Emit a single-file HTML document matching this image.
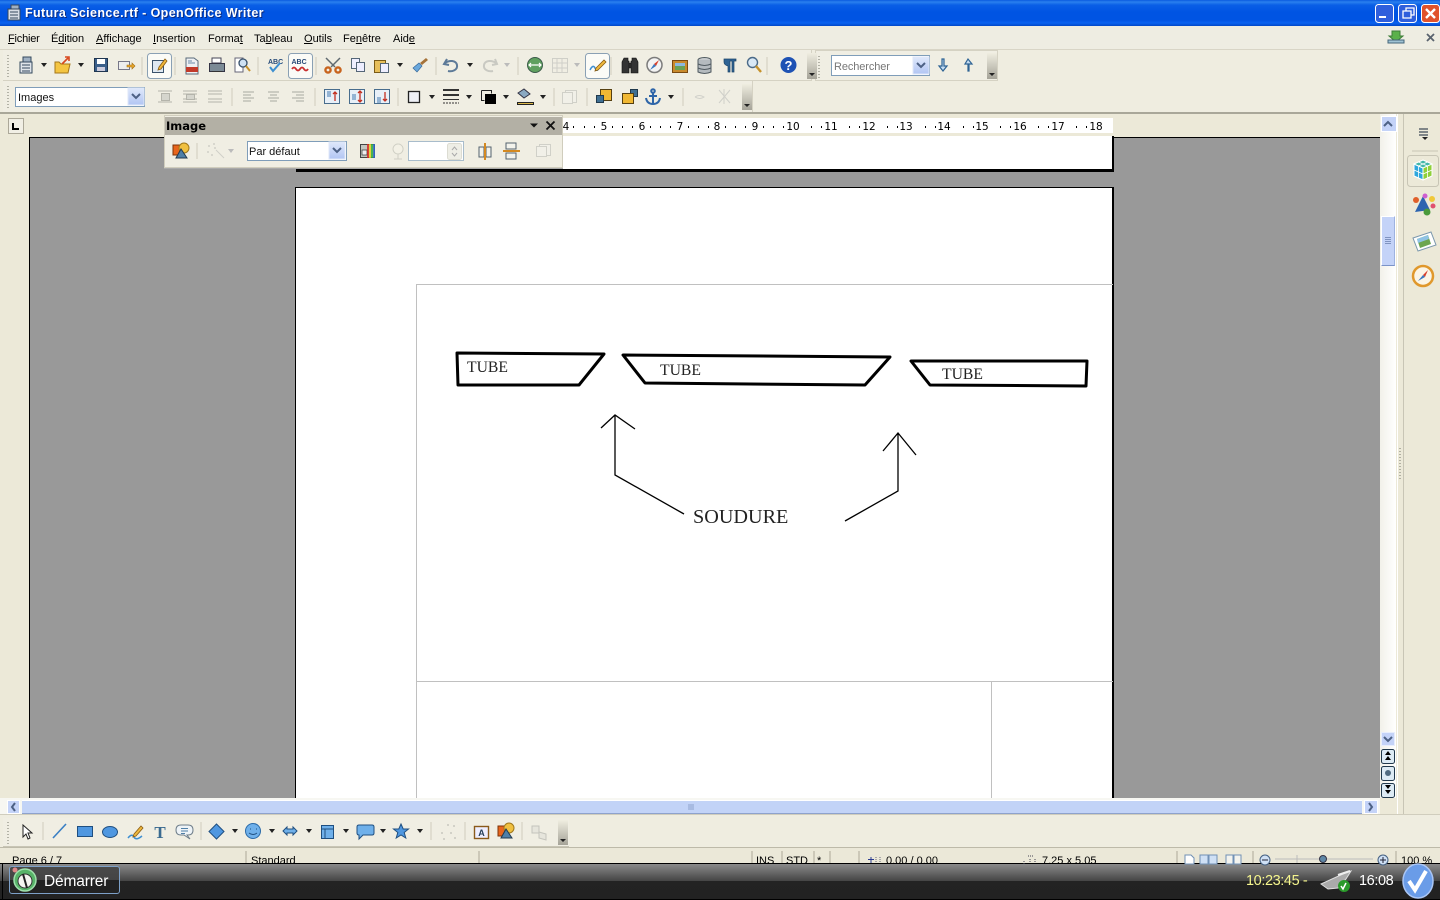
<!DOCTYPE html>
<html><head><meta charset="utf-8"><style>
html,body{margin:0;padding:0;width:1440px;height:900px;overflow:hidden;background:#ece9d8}
#a{position:relative;width:1440px;height:900px;overflow:hidden;font-family:"Liberation Sans",sans-serif}
.b{position:absolute}
.t{position:absolute;white-space:nowrap;font-size:11px;color:#000;line-height:13px}
u{text-decoration:underline}
svg{position:absolute;left:0;top:0}
.r{position:absolute;top:121px;font:10.5px/12px "DejaVu Sans",sans-serif;color:#000;transform:translateX(-50%)}
</style></head><body><div id="a">
<div class="b" style="left:0;top:0;width:1440px;height:26px;background:linear-gradient(#0a5be0 0,#2a80ee 2px,#0a5fe6 5px,#0054e3 12px,#0054e3 20px,#0a62f0 23px,#0048c8 26px)"></div>
<div class="t" style="left:25px;top:6px;font:bold 12.5px/15px 'Liberation Sans',sans-serif;color:#fff;letter-spacing:.39px;text-shadow:1px 1px #0a2a80">Futura Science.rtf - OpenOffice Writer</div>
<div class="b" style="left:0;top:26px;width:1440px;height:24px;background:#eeede2;border-bottom:1px solid #d8d5c6;box-sizing:border-box"></div>
<div class="t" style="left:8px;top:33px;letter-spacing:-.2px"><u>F</u>ichier</div>
<div class="t" style="left:51px;top:33px;letter-spacing:-.1px">É<u>d</u>ition</div>
<div class="t" style="left:96px;top:33px"><u>A</u>ffichage</div>
<div class="t" style="left:153px;top:33px"><u>I</u>nsertion</div>
<div class="t" style="left:208px;top:33px">Forma<u>t</u></div>
<div class="t" style="left:254px;top:33px">Ta<u>b</u>leau</div>
<div class="t" style="left:304px;top:33px"><u>O</u>utils</div>
<div class="t" style="left:343px;top:33px">Fe<u>n</u>être</div>
<div class="t" style="left:393px;top:33px">Aid<u>e</u></div>
<div class="b" style="left:0;top:50px;width:1440px;height:62px;background:#efede0"></div>
<div class="b" style="left:3px;top:50px;width:809px;height:31px;background:#f0eee3;border-right:1px solid #d5d2c3;border-bottom:1px solid #d5d2c3;box-sizing:border-box"></div>
<div class="b" style="left:815px;top:50px;width:183px;height:31px;background:#f0eee3;border:1px solid #d5d2c3;box-sizing:border-box"></div>
<div class="b" style="left:3px;top:81px;width:750px;height:31px;background:#f0eee3;border-right:1px solid #d5d2c3;box-sizing:border-box"></div>
<div class="b" style="left:0;top:112px;width:1440px;height:2px;background:#a9a799"></div>
<div class="b" style="left:0;top:114px;width:1440px;height:24px;background:#ece9d8"></div>
<div class="b" style="left:563px;top:118px;width:550px;height:15px;background:#fff"></div>
<div class="b" style="left:29px;top:137px;width:1351px;height:661px;background:#999;border-top:1px solid #000;border-left:1px solid #000;box-sizing:border-box"></div>
<div class="b" style="left:296px;top:136px;width:818px;height:36px;background:#fff;border:2px solid #000;border-top:0;border-bottom-width:3px;border-left-width:1px;box-sizing:border-box"></div>
<div class="b" style="left:295px;top:187px;width:819px;height:611px;background:#fff;border:1px solid #000;border-bottom:0;border-right-width:2px;box-sizing:border-box"></div>
<div class="b" style="left:416px;top:284px;width:1px;height:514px;background:#c0c0c0"></div>
<div class="b" style="left:416px;top:284px;width:697px;height:1px;background:#c0c0c0"></div>
<div class="b" style="left:416px;top:681px;width:697px;height:1px;background:#c0c0c0"></div>
<div class="b" style="left:991px;top:681px;width:1px;height:117px;background:#c0c0c0"></div>
<div class="t" style="left:467px;top:358px;font:16px/19px 'Liberation Serif',serif;color:#222;transform:scaleX(.98);transform-origin:left">TUBE</div>
<div class="t" style="left:660px;top:361px;font:16px/19px 'Liberation Serif',serif;color:#222;transform:scaleX(.98);transform-origin:left">TUBE</div>
<div class="t" style="left:942px;top:365px;font:16px/19px 'Liberation Serif',serif;color:#222;transform:scaleX(.98);transform-origin:left">TUBE</div>
<div class="t" style="left:693px;top:506px;font:20px/23px 'Liberation Serif',serif;color:#222;transform:scaleX(1.01);transform-origin:left">SOUDURE</div>
<div class="r" style="left:566px">4</div><div class="r" style="left:604px">5</div><div class="r" style="left:642px">6</div><div class="r" style="left:680px">7</div><div class="r" style="left:717px">8</div><div class="r" style="left:755px">9</div><div class="r" style="left:793px">10</div><div class="r" style="left:831px">11</div><div class="r" style="left:869px">12</div><div class="r" style="left:906px">13</div><div class="r" style="left:944px">14</div><div class="r" style="left:982px">15</div><div class="r" style="left:1020px">16</div><div class="r" style="left:1058px">17</div><div class="r" style="left:1096px">18</div>
<div class="b" style="left:8px;top:118px;width:16px;height:16px;background:#f1efe5;border:1px solid #aca899;box-sizing:border-box"></div>
<div class="b" style="left:164px;top:115px;width:399px;height:53px;background:#f0eee3;border:1px solid #d0cdbd;box-sizing:border-box;box-shadow:0 1px 0 #aaa"></div>
<div class="b" style="left:165px;top:117px;width:397px;height:18px;background:#b3b0a5"></div>
<div class="t" style="left:166px;top:119px;font:bold 11.5px/14px 'DejaVu Sans',sans-serif">Image</div>
<div class="b" style="left:15px;top:87px;width:130px;height:20px;background:#fff;border:1px solid #7f9db9;box-sizing:border-box"></div>
<div class="t" style="left:18px;top:92px;color:#111">Images</div>
<div class="b" style="left:247px;top:141px;width:100px;height:20px;background:#fff;border:1px solid #7f9db9;box-sizing:border-box"></div>
<div class="t" style="left:249px;top:146px;color:#111">Par défaut</div>
<div class="b" style="left:408px;top:141px;width:56px;height:20px;background:#fff;border:1px solid #a8bccb;box-sizing:border-box"></div>
<div class="b" style="left:831px;top:55px;width:99px;height:21px;background:#fff;border:1px solid #7f9db9;box-sizing:border-box"></div>
<div class="t" style="left:834px;top:61px;color:#777;letter-spacing:-.1px">Rechercher</div>
<div class="b" style="left:1380px;top:114px;width:16px;height:684px;background:linear-gradient(90deg,#f2f1ea,#fff)"></div>
<div class="b" style="left:1396px;top:114px;width:44px;height:736px;background:#ece9d8"></div>
<div class="b" style="left:1397px;top:114px;width:1px;height:736px;background:#fff"></div>
<div class="b" style="left:1403px;top:114px;width:1px;height:736px;background:#c8c5b5"></div>
<div class="b" style="left:1381px;top:116px;width:14px;height:14px;background:#c4d3f8;border:1px solid #fff;box-shadow:0 0 0 0 #000"></div>
<div class="b" style="left:1381px;top:216px;width:14px;height:50px;background:#c4d3f8;border-left:1px solid #fff;border-top:1px solid #fff;border-bottom:1px solid #7b93c8;border-right:1px solid #9db2e0;box-sizing:border-box"></div>
<div class="b" style="left:1381px;top:732px;width:14px;height:14px;background:#c4d3f8;box-sizing:border-box;border:1px solid #e8eefc"></div>
<div class="b" style="left:0;top:798px;width:1380px;height:16px;background:#f7f7f2"></div>
<div class="b" style="left:7px;top:800px;width:13px;height:14px;background:#c4d3f8;border:1px solid #fff;box-sizing:border-box"></div>
<div class="b" style="left:22px;top:800px;width:1340px;height:14px;background:#c2d3f7;border-bottom:1px solid #8ea2cc;border-top:1px solid #fff;box-sizing:border-box"></div>
<div class="b" style="left:1364px;top:800px;width:14px;height:14px;background:#c4d3f8;border:1px solid #fff;box-sizing:border-box"></div>
<div class="b" style="left:0;top:814px;width:1440px;height:36px;background:#efede0;border-top:1px solid #d0cdbd;box-sizing:border-box"></div>
<div class="b" style="left:3px;top:818px;width:566px;height:29px;background:#f0eee3;border-bottom:1px solid #c8c5b5;box-sizing:border-box"></div>
<div class="b" style="left:0;top:847px;width:1440px;height:16px;background:#ebe8d8;border-top:1px solid #bdbaa9;box-sizing:border-box"></div>
<div class="t" style="left:12px;top:855px">Page 6 / 7</div>
<div class="t" style="left:251px;top:855px">Standard</div>
<div class="t" style="left:756px;top:855px">INS</div>
<div class="t" style="left:786px;top:855px">STD</div>
<div class="t" style="left:817px;top:855px">*</div>
<div class="t" style="left:886px;top:855px">0,00 / 0,00</div>
<div class="t" style="left:1042px;top:855px">7,25 x 5,05</div>
<div class="t" style="left:1401px;top:855px">100 %</div>
<div class="b" style="left:0;top:863px;width:1440px;height:37px;background:linear-gradient(#000 0,#000 1px,#8a8a8a 1px,#454545 18px,#232323 18px,#222 36px,#000 36px);z-index:5"></div>
<div class="b" style="left:2px;top:863px;width:1px;height:37px;background:#000;z-index:6"></div>
<div class="b" style="left:9px;top:866px;width:111px;height:28px;background:linear-gradient(#4a4a4a,#444 50%,#222 50%);border:1px solid #7da0c8;border-radius:3px;box-sizing:border-box;z-index:6"></div>
<div class="t" style="left:44px;top:873px;font-size:15.5px;line-height:18px;color:#fff;z-index:7;letter-spacing:-.15px">Démarrer</div>
<div class="t" style="left:1246px;top:873px;font-size:14.5px;line-height:17px;color:#f5f58e;z-index:7;letter-spacing:-.4px">10:23:45 -</div>
<div class="t" style="left:1359px;top:873px;font-size:14.5px;line-height:17px;color:#fff;z-index:7;letter-spacing:-.4px">16:08</div>
<svg width="1440" height="900" viewBox="0 0 1440 900" style="z-index:8" fill="none">
<!-- drawing -->
<g stroke="#000" stroke-width="3" stroke-linejoin="round"><path d="M457 353L604 354L579 385L458 385Z"/><path d="M623 355L890 357L865 385L645 383Z"/><path d="M911 361L1087 361L1086 386L930 385Z"/></g>
<g stroke="#000" stroke-width="1.3"><path d="M601 428L615 415L635 429M615 415V475L684 514"/><path d="M883 451L898 433L916 455M898 433V491L845 521"/></g>
<!-- title icons -->
<g><rect x="8" y="9" width="12" height="11" fill="#d8dde6" stroke="#33465c"/><path d="M11 5h8v4h-8z" fill="#9fb0c2" stroke="#33465c"/><path d="M10 12h8M10 15h8M10 18h8" stroke="#33465c"/></g>
<g stroke="#fff"><rect x="1375.5" y="4.5" width="18" height="18" rx="3" fill="#2f5fdc"/><rect x="1398.5" y="4.5" width="18" height="18" rx="3" fill="#2f5fdc"/><rect x="1421.5" y="4.5" width="18" height="18" rx="3" fill="#e0522c"/></g>
<path d="M1379 17h7" stroke="#fff" stroke-width="2"/><path d="M1403 11h8v7h-8zM1406 11V8h8v7h-3" stroke="#fff" stroke-width="1.3"/><path d="M1426 9l9 9M1435 9l-9 9" stroke="#fff" stroke-width="2.4"/>
<path d="M1388 42h16M1392 31h8v5h3l-7 6-7-6h3z" fill="#5bb14a" stroke="#3e7d38"/><rect x="1388" y="40" width="16" height="3" fill="#9fc3d4" stroke="#44667a"/>
<path d="M1427 34l7 7M1434 34l-7 7" stroke="#59636e" stroke-width="1.8"/>
<!-- handles -->
<g stroke="#8a8a7e" stroke-dasharray="1 2" stroke-width="1.2"><path d="M8 55v22M8 86v22M8 822v22M819 56v22M1400 448v32"/></g>
<!-- separators -->
<g stroke="#cfccbd"><path d="M142 57v18M175 57v18M258 57v18M316 57v18M436 57v18M518 57v18M611 57v18M767 57v18M232 88v18M315 88v18M398 88v18M554 88v18M587 88v18M683 88v18M197 143v16M43 822v18M201 822v18M431 822v18M465 822v18M522 822v18"/></g>
<g stroke="#aca899"><path d="M246 851v12M479 851v12M752 851v12M782 851v12M814 851v12M830 851v12M859 851v12M1177 851v12M1253 851v12M1396 851v12"/></g>
<!-- toggled boxes -->
<g fill="#fbfbf7" stroke="#8aa0b4"><rect x="147.5" y="53.5" width="24" height="25" rx="3"/><rect x="288.5" y="53.5" width="24" height="25" rx="3"/><rect x="585.5" y="53.5" width="24" height="25" rx="3"/></g>
<!-- arrows -->
<g fill="#222"><path d="M41 63h6l-3 4zM78 63h6l-3 4zM397 63h6l-3 4zM467 63h6l-3 4zM429 95h6l-3 4zM466 95h6l-3 4zM503 95h6l-3 4zM540 95h6l-3 4zM668 95h6l-3 4zM232 829h6l-3 4zM269 829h6l-3 4zM306 829h6l-3 4zM343 829h6l-3 4zM380 829h6l-3 4zM417 829h6l-3 4z"/></g>
<g fill="#bbb"><path d="M504 63h6l-3 4zM574 63h6l-3 4zM228 149h6l-3 4z"/></g>
<!-- toolbar 1 -->
<path d="M20 62h12v11H20z" fill="#dfe4ea" stroke="#34495e"/><path d="M23 57h8v5h-8z" fill="#9fb0c2" stroke="#34495e"/><path d="M22 65h8M22 68h8M22 71h8" stroke="#34495e"/>
<path d="M55 62h4l2 2h9l-2 9H55z" fill="#f4c542" stroke="#a5761a"/><path d="M62 64l6-6M65 57h4v4" stroke="#d9481e" stroke-width="1.6"/>
<rect x="94.500" y="58.500" width="13" height="13" fill="#3a5f8a" stroke="#1f3550"/><rect x="97" y="59" width="8" height="5" fill="#fff"/><rect x="97" y="67" width="8" height="4" fill="#ccd"/>
<rect x="118.500" y="61.500" width="11" height="8" fill="#eee" stroke="#778"/><path d="M127 65h5v-2l3 3-3 3v-2h-5z" fill="#e9a72c" stroke="#a26f12" stroke-width=".6"/>
<rect x="152.500" y="60.500" width="11" height="12" fill="#dfe8f1" stroke="#3a526b"/><path d="M159 67l6-8 2 2-6 8-3 1z" fill="#f0b73a" stroke="#8a5c12" stroke-width=".8"/>
<path d="M186 58h8l4 3v13h-12z" fill="#eef0f3" stroke="#5a6a7a"/><path d="M188 61h4M188 63h7" stroke="#6a8aa8"/><rect x="186" y="67" width="12" height="5" fill="#c23a2a"/>
<path d="M212 58h9v5h-9z" fill="#fff" stroke="#445"/><rect x="209.500" y="63.500" width="15" height="8" fill="#7b8a96" stroke="#334"/><rect x="212" y="71" width="10" height="1" fill="#333"/>
<path d="M235 58h8v14h-8z" fill="#fff" stroke="#667"/><circle cx="243" cy="63" r="4" fill="#cfe2f3" stroke="#37506b" stroke-width="1.3"/><path d="M246 66l4 5" stroke="#c6922c" stroke-width="2"/>
<text x="268" y="64" font-family="Liberation Sans" font-size="7" font-weight="bold" fill="#274a78">ABC</text><path d="M270 67l3 4 7-8" stroke="#3d8fd0" stroke-width="2"/>
<text x="291.500" y="64" font-family="Liberation Sans" font-size="7" font-weight="bold" fill="#274a78">ABC</text><path d="M292 69q2-3 4 0t4 0 4 0 4 0" stroke="#c92f2f" stroke-width="1.8"/>
<path d="M326 58l9 9M340 58l-9 9" stroke="#606a70" stroke-width="1.5"/><circle cx="328" cy="70" r="2.600" stroke="#c8641e" stroke-width="2.4"/><circle cx="338" cy="70" r="2.600" stroke="#c8641e" stroke-width="2.4"/>
<rect x="351.500" y="58.500" width="8" height="10" fill="#eef" stroke="#567"/><rect x="356.500" y="62.500" width="8" height="9" fill="#eef" stroke="#567"/>
<rect x="374.500" y="60.500" width="11" height="12" fill="#e7bf5b" stroke="#7a5b17"/><rect x="380.500" y="63.500" width="8" height="9" fill="#eef" stroke="#567"/>
<path d="M426 58l2 2-6 5-2-2z" fill="#a57238"/><path d="M413 68l6-5 3 3-5 6z" fill="#6aa8dc" stroke="#35689a" stroke-width=".7"/>
<path d="M447 59l-3 5 5 1M445 63c4-3 11-3 12 2s-5 7-9 6" stroke="#5d7a98" stroke-width="2"/>
<path d="M495 59l2 5-5 1M496 63c-4-3-11-3-12 2s5 7 9 6" stroke="#c9c9c2" stroke-width="2"/>
<circle cx="535" cy="65" r="7.500" fill="#5fa05f" stroke="#3b5a4a"/><path d="M529 65h12M531 63l-2 2 2 2M539 63l2 2-2 2" stroke="#fff" stroke-width="1.2"/>
<path d="M552.500 58.500h15v14h-15zM552 63h16M552 68h16M557 58v14M562 58v14" stroke="#cfcfc8"/>
<path d="M590 70q3-6 5-2t3 1" stroke="#3f8fd1" stroke-width="1.5"/><path d="M596 68l8-8 2 2-8 8-3 1z" fill="#efb93e" stroke="#8a5c12" stroke-width=".8"/>
<path d="M624 58h4v3h1v12h-7V62zM632 58h4l2 4v11h-7V61h1zM629 63h2v5h-2z" fill="#333" stroke="#111" stroke-width=".6"/>
<circle cx="654.500" cy="65" r="7.500" fill="#f3f3f3" stroke="#7b7b7b" stroke-width="1.5"/><path d="M654 64l5-4-3 6z" fill="#d8402d"/><path d="M650 70l4-6 2 2z" fill="#3a78c0"/>
<rect x="672.500" y="60.500" width="15" height="12" fill="#c98a2c" stroke="#7a4a12"/><rect x="675" y="63" width="10" height="7" fill="#6aa255"/><rect x="675" y="63" width="10" height="3" fill="#8db8dd"/>
<ellipse cx="704.500" cy="60" rx="6.500" ry="2.500" fill="#c5c9cc" stroke="#505a60"/><path d="M698 60v12q6.500 3 13 0V60M698 64q6.500 3 13 0M698 68q6.500 3 13 0" fill="#b5bbbf" stroke="#505a60"/>
<path d="M724 59h12v2h-2v11h-2V61h-2v11h-2v-6q-4-1-4-4t0-3z" fill="#2e6394" stroke="#1d4468" stroke-width=".7"/>
<circle cx="752.500" cy="62.500" r="5" fill="#d9e8f5" stroke="#4b6a88" stroke-width="1.4"/><path d="M756 66l5 6" stroke="#c6922c" stroke-width="2.4"/>
<circle cx="788.500" cy="65" r="8" fill="#1e52b4"/><text x="788.500" y="70" text-anchor="middle" font-family="Liberation Sans" font-weight="bold" font-size="13" fill="#fff">?</text>
<path d="M943 59v7h-3l4 5 4-5h-3v-7z" transform="translate(-1 0)" fill="#c5dcf2" stroke="#2e6394" stroke-width="1.200"/>
<path d="M968 71v-7h-3l3-5 4 5h-3v7z" fill="#c5dcf2" stroke="#2e6394" stroke-width="1.200"/>
<defs><linearGradient id="ov" x1="0" y1="0" x2="0" y2="1"><stop offset="0" stop-color="#efede0"/><stop offset="1" stop-color="#a5a398"/></linearGradient><linearGradient id="dd" x1="0" y1="0" x2="0" y2="1"><stop offset="0" stop-color="#dfe8fb"/><stop offset="1" stop-color="#b1c5f3"/></linearGradient></defs>
<g fill="url(#ov)"><rect x="807" y="53" width="10" height="26"/><rect x="987" y="53" width="10" height="26"/><rect x="742" y="84" width="10" height="26"/><rect x="558" y="820" width="10" height="25"/></g>
<g fill="#222"><path d="M809 73h6l-3 3zM989 73h6l-3 3zM744 104h6l-3 3zM560 839h6l-3 3z"/></g>
<g fill="url(#dd)" stroke="#dfe7f8"><rect x="913" y="57" width="16" height="17"/><rect x="128" y="88" width="16" height="17"/><rect x="329" y="142" width="16" height="17"/></g>
<g stroke="#4d6185" stroke-width="2"><path d="M917 63l4 4 4-4M132 94l4 4 4-4M333 148l4 4 4-4"/></g>
<!-- toolbar 2 -->
<g stroke="#b4b4ab"><path d="M158 91h14M158 102h14M183 91h14M183 102h14M208 91h14M208 102h14M208 94h14M208 99h14M183 94h14M183 99h14"/><rect x="161.500" y="93.500" width="8" height="7" fill="#d5d5cd"/><rect x="186.500" y="94.500" width="8" height="5" fill="#d5d5cd"/></g>
<g stroke="#a9a9a0"><path d="M243 92h11M243 95h8M243 98h11M243 101h8M268 92h11M270 95h7M268 98h11M270 101h7M292 92h12M296 95h8M292 98h12M296 101h8"/></g>
<g fill="#e8f0f8" stroke="#486d8d"><rect x="324.500" y="89.500" width="15" height="14"/><rect x="349.500" y="89.500" width="15" height="14"/><rect x="374.500" y="89.500" width="15" height="14"/></g>
<g stroke="#3f78b0"><path d="M327 92h4M327 94h4M327 96h4M352 95h4M352 97h4M352 99h4M377 98h4M377 100h4M377 102h4"/></g>
<g stroke="#c22f20" stroke-width="1.300"><path d="M335 92v9M333 94l2-2 2 2M360 91v11M358 93l2-2 2 2M358 100l2 2 2-2M385 92v9M383 99l2 2 2-2"/></g>
<rect x="408.500" y="91.500" width="11" height="11" fill="#eef0f6" stroke="#222" stroke-width="1.300"/>
<path d="M443 90h16" stroke="#333" stroke-width="2"/><path d="M443 95h16" stroke="#333" stroke-width="2"/><path d="M443 99.500h16" stroke="#333"/><path d="M443 103h16" stroke="#333" stroke-dasharray="2 1"/>
<path d="M481.500 90.500h10v3M481.500 90.500v10h3" stroke="#222"/><rect x="485" y="94" width="11" height="10" fill="#000"/>
<path d="M518 93l6-4 6 5-6 4z" fill="#8aa9c2" stroke="#334"/><rect x="517.500" y="102.500" width="16" height="2" fill="#dbb84a" stroke="#222"/>
<g stroke="#d0d0c8" fill="#f1f0e8"><rect x="565.500" y="90.500" width="11" height="12"/><rect x="562.500" y="92.500" width="10" height="11"/></g>
<rect x="600.500" y="89.500" width="11" height="11" fill="#f1b833" stroke="#564011"/><rect x="596.500" y="95.500" width="7" height="7" fill="#3f6f92" stroke="#20394c"/>
<rect x="630.500" y="89.500" width="7" height="7" fill="#3f6f92" stroke="#20394c"/><rect x="622.500" y="93.500" width="11" height="10" fill="#f1b833" stroke="#564011"/>
<g stroke="#2e65a8" stroke-width="2"><circle cx="653" cy="91" r="1.800"/><path d="M653 93v11M649 96h8M646 98q1 6 7 6t7-6"/></g>
<path d="M695 97q4-3 9 0-4 3-9 0M719 90l11 13M730 90l-11 13M724 89v15" stroke="#d0d0ca"/>
<!-- ruler L -->
<path d="M13 123v6h6" stroke="#000" stroke-width="2"/>
<!-- ruler ticks -->
<g fill="#000" transform="translate(0 1)"><path d="M584 125h1v2h-1zM594 125h1v2h-1zM573 125h1v2h-1zM622 125h1v2h-1zM632 125h1v2h-1zM612 125h1v2h-1zM660 125h1v2h-1zM670 125h1v2h-1zM650 125h1v2h-1zM698 125h1v2h-1zM708 125h1v2h-1zM688 125h1v2h-1zM735 125h1v2h-1zM745 125h1v2h-1zM725 125h1v2h-1zM773 125h1v2h-1zM783 125h1v2h-1zM763 125h1v2h-1zM811 125h1v2h-1zM821 125h1v2h-1zM849 125h1v2h-1zM859 125h1v2h-1zM887 125h1v2h-1zM897 125h1v2h-1zM925 125h1v2h-1zM935 125h1v2h-1zM963 125h1v2h-1zM973 125h1v2h-1zM1000 125h1v2h-1zM1010 125h1v2h-1zM1038 125h1v2h-1zM1048 125h1v2h-1zM1076 125h1v2h-1zM1086 125h1v2h-1z"/></g>
<!-- float toolbar -->
<path d="M530 123.500h8l-4 4z" fill="#111"/><path d="M546.500 121.500l8 8M554.500 121.500l-8 8" stroke="#111" stroke-width="1.800"/>
<g><rect x="173" y="145" width="10" height="10" fill="#e8651c" stroke="#7d3208"/><circle cx="184" cy="148" r="5" fill="#f0c040" stroke="#a0781b"/><path d="M176 158l5-9 6 9z" fill="#4f7fa7" stroke="#223a50"/></g>
<g stroke="#cfcfc8"><path d="M216 150l8 8"/><path d="M208 146h2M213 144h2M207 152h2M214 148h2M211 155h2" stroke-width="1.500"/></g>
<rect x="360.500" y="144.500" width="14" height="13" fill="#c3c6c0" stroke="#444"/><rect x="362" y="150" width="5" height="5" fill="#eee" stroke="#333" stroke-width=".7"/><g stroke-width="1.700"><path d="M368 144v14" stroke="#d82a20"/><path d="M370 144v14" stroke="#e8d52a"/><path d="M372 144v14" stroke="#35b13d"/><path d="M374 144v14" stroke="#2e6ac8"/></g>
<path d="M398 144a5 5 0 1 0 .1 0M398 154v5M394 159h8" stroke="#cfcfc4" fill="#f3f1e6"/>
<rect x="447.500" y="143.500" width="14" height="16" rx="2" fill="#eeeee6" stroke="#dcdcd2"/><path d="M452 150l2.500-3 2.500 3M452 153l2.500 3 2.500-3" stroke="#aaa"/>
<path d="M479 147h5v10h-5zM486 147h5v10h-5z" fill="#f3f3ec" stroke="#53616e"/><path d="M485 143v17" stroke="#d48920" stroke-width="2"/>
<path d="M506 143h10v6h-10zM506 153h10v6h-10z" fill="#f3f3ec" stroke="#53616e"/><path d="M503 151h17" stroke="#d48920" stroke-width="2"/>
<g stroke="#d0d0c8" fill="#f1f0e8"><rect x="539.500" y="144.500" width="11" height="11"/><rect x="536.500" y="146.500" width="10" height="10"/></g>
<!-- side panel / scrollbars -->
<path d="M1419 129h9M1419 132h9M1419 135h9" stroke="#3f4b57" stroke-width="1.200"/><path d="M1422 137h6l-3 3z" fill="#222"/>
<path d="M1412 151h26" stroke="#c8c5b5"/>
<rect x="1407.500" y="155.500" width="31" height="31" rx="3" stroke="#c8c5b5"/>
<path d="M1414 164l9-4 9 4v12l-9 4-9-4z" fill="#8fd03a" stroke="#fff"/><path d="M1414 164l9 4v12l-9-4z" fill="#2ea7dc" stroke="#fff"/><path d="M1414 164l9-4 9 4-9 4z" fill="#42b7a8" stroke="#fff"/><path d="M1414 170l9 4 9-4M1418.500 162l9 4v12M1427.500 162l-9 4v12" stroke="#fff" stroke-width=".8"/>
<path d="M1415 212l8-16 7 14z" fill="#2c64b0"/><circle cx="1416" cy="200" r="3" fill="#e0602a"/><circle cx="1425" cy="196" r="2.500" fill="#cf5fd0"/><circle cx="1432" cy="199" r="3" fill="#f0c83a"/><circle cx="1433" cy="206" r="2.500" fill="#e05070"/><circle cx="1427" cy="212" r="3.500" fill="#4a9a3c"/>
<path d="M1413 238l18-6 5 13-18 6z" fill="#fff" stroke="#7b97ac"/><path d="M1417 239l11-4 3 9-11 4z" fill="#6da64f"/><path d="M1417 239l11-4 1 4-11 4z" fill="#8fc3e5"/>
<circle cx="1423" cy="276" r="10" fill="#fbf5e6" stroke="#e0982c" stroke-width="2.500"/><path d="M1423 275l5-5-3 7z" fill="#d8402d"/><path d="M1418 281l5-6 2 2z" fill="#3a78c0"/>
<path d="M1384 126l4-4 4 4" stroke="#4d6185" stroke-width="2"/>
<path d="M1384 737l4 4 4-4" stroke="#4d6185" stroke-width="2"/>
<path d="M1385 237.500h6M1385 239.500h6M1385 241.500h6M1385 243.500h6" stroke="#7f93c0"/>
<path d="M689 804v6M691 804v6M693 804v6" stroke="#8fa3cd"/>
<path d="M15 803l-3 4 3 4" stroke="#4d6185" stroke-width="2"/><path d="M1369 803l3 4-3 4" stroke="#4d6185" stroke-width="2"/>
<g fill="#ddebf5" stroke="#20384c"><rect x="1381.500" y="749.500" width="13" height="14" rx="2"/><rect x="1381.500" y="766.500" width="13" height="14" rx="2"/><rect x="1381.500" y="783.500" width="13" height="14" rx="2"/></g>
<path d="M1388 751l3 4h-6zM1388 756l3 4h-6zM1385 785h6l-3 4zM1385 790h6l-3 4z" fill="#000"/><circle cx="1388" cy="773" r="3" fill="#506a80"/>
<!-- draw toolbar -->
<path d="M23 825v12l3-3 2 5 2-1-2-5h4z" fill="#fff" stroke="#222"/>
<path d="M53 838l13-14" stroke="#3a7fc4" stroke-width="1.600"/>
<rect x="77.500" y="826.500" width="15" height="10" fill="#4f97e0" stroke="#1f4f80"/>
<ellipse cx="110" cy="832" rx="7.500" ry="5.500" fill="#4f97e0" stroke="#1f4f80"/>
<path d="M128 838q4-5 6-1t8-1" stroke="#3f8fd1" stroke-width="1.500"/><path d="M134 834l7-8 2 2-7 8-3 1z" fill="#efb93e" stroke="#8a5c12" stroke-width=".8"/>
<text x="160" y="838" text-anchor="middle" font-family="Liberation Serif" font-weight="bold" font-size="17" fill="#3a6a90">T</text>
<path d="M181 825h7q5 0 5 5t-5 5h-1l3 4-6-4h-3q-5 0-5-5t5-5z" fill="#eef3f7" stroke="#6f7e8a"/><path d="M181 828.500h7M181 831h7M181 833.500h4" stroke="#4f7fa7"/>
<path d="M216.500 824l7.500 7.500-7.500 7.500-7.500-7.500z" fill="#4f97e0" stroke="#1f4f80"/>
<circle cx="253" cy="831" r="7.500" fill="#6fb0ea" stroke="#2a6aa8"/><path d="M250 829h1M256 829h1M249 833q4 3 8 0" stroke="#1f4f80"/>
<path d="M283 831l4-4v2h6v-2l4 4-4 4v-2h-6v2z" fill="#6fb0ea" stroke="#1f4f80"/>
<rect x="321.500" y="825.500" width="12" height="13" fill="#6fb0ea" stroke="#1f4f80"/><path d="M321 829h12M325 829v9" stroke="#1f4f80"/>
<path d="M359 825h13q2 0 2 2v6q0 2-2 2h-9l-4 4v-4q-2 0-2-2v-6q0-2 2-2z" fill="#6fb0ea" stroke="#1f4f80"/>
<path d="M401 824l2.200 5h5.300l-4.300 3.500 1.600 5.500-4.800-3-4.800 3 1.600-5.500-4.300-3.500h5.300z" fill="#4f97e0" stroke="#1f4f80"/>
<g fill="#c8c8c0"><circle cx="448" cy="825" r="1"/><circle cx="454" cy="826" r="1"/><circle cx="442" cy="833" r="1"/><circle cx="451" cy="833" r="1"/><circle cx="455" cy="838" r="1"/><circle cx="444" cy="839" r="1"/></g>
<rect x="474.500" y="826.500" width="14" height="12" fill="#eef" stroke="#8a5a1a" stroke-width="1.400"/><text x="481.500" y="836" text-anchor="middle" font-family="Liberation Sans" font-weight="bold" font-size="9" fill="#27405a">A</text>
<g transform="translate(325 680)"><rect x="173" y="146" width="10" height="10" fill="#e8651c" stroke="#7d3208"/><circle cx="184" cy="148" r="5" fill="#f0c040" stroke="#a0781b"/><path d="M176 158l5-9 6 9z" fill="#4f7fa7" stroke="#223a50"/></g>
<path d="M532 826h7v7h-7zM539 832l7 2v6l-7-2z" stroke="#c4c4bc" fill="#e6e5dc"/>
<!-- status icons -->
<path d="M871 857v6M868 859.500h6" stroke="#2a3b90"/><path d="M876 857v6M880 857v6" stroke="#667" stroke-dasharray="1 1"/>
<path d="M1024 861v3M1028 856h6M1030 859v4M1035 859v4" stroke="#445" stroke-dasharray="1 1"/>
<g fill="#fff" stroke="#7090b5"><path d="M1185 855h6l3 3v6h-9z"/><path d="M1200 855h8v9h-8zM1209 855h8v9h-8z" fill="#cfe0f5"/><path d="M1226 855h7v9h-7zM1234 855h7v9h-7z" fill="#f3f3ee"/></g>
<circle cx="1265" cy="860" r="5" fill="#cfe0f5" stroke="#445f80"/><path d="M1262 860h6" stroke="#223"/><circle cx="1383" cy="860" r="5" fill="#cfe0f5" stroke="#445f80"/><path d="M1380 860h6M1383 857v6" stroke="#223"/>
<path d="M1275 859h98M1297 855v8" stroke="#bbb"/><circle cx="1323" cy="859" r="3.500" fill="#5f87a6" stroke="#334"/>
</svg>
<svg width="1440" height="900" viewBox="0 0 1440 900" style="z-index:9" fill="none">
<circle cx="25" cy="880" r="11" fill="#57b368" stroke="#a0e0ac" stroke-width="1.500"/><circle cx="25" cy="881" r="7" fill="#f4f4f0" stroke="#333"/><path d="M23 874l4 14" stroke="#222" stroke-width="2"/><circle cx="15" cy="870" r="2.500" fill="#d88"/>
<path d="M1321 884l22-10 8-3-5 8-8 9-10 1z" fill="#aaa" stroke="#ddd"/><path d="M1338 875l12-4" stroke="#eee" stroke-width="2"/>
<circle cx="1344" cy="886" r="6" fill="#2a9a2a"/><path d="M1341 886l2 3 3-6" stroke="#fff" stroke-width="1.500"/>
<ellipse cx="1418" cy="881" rx="15" ry="17" fill="#6a9ce8" stroke="#aac6f5" stroke-width="1.500"/><path d="M1409 881l6 9 11-19" stroke="#fff" stroke-width="4"/>
</svg>
</div></body></html>
